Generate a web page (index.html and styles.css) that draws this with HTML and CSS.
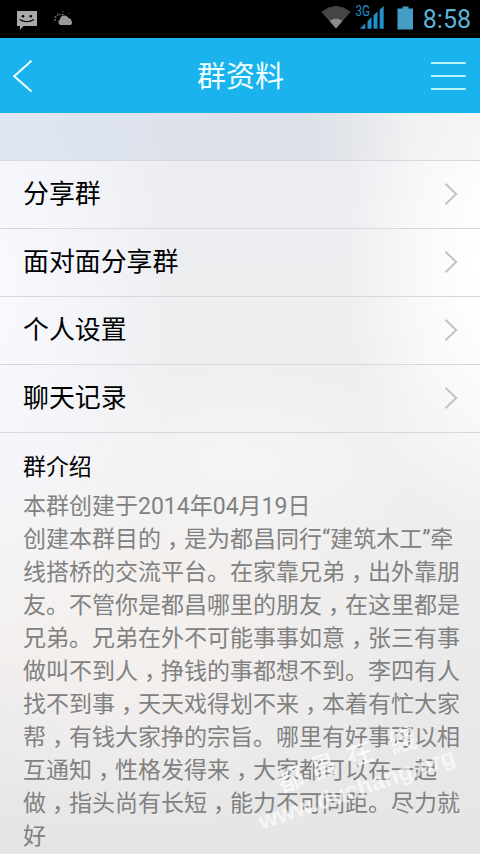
FILE: index.html
```html
<!DOCTYPE html>
<html lang="zh-CN">
<head>
<meta charset="utf-8">
<title>群资料</title>
<link rel="stylesheet" href="styles.css">
</head>
<body>
<div class="status">
  <svg class="notifications" width="60" height="38" viewBox="0 0 60 38">
    <path d="M1 11h20v15H7.500l-3.500 4v-4H1z" fill="#a9a9a9"/>
    <circle cx="7" cy="16.300" r="1.300" fill="#000"/><circle cx="14.800" cy="16.300" r="1.300" fill="#000"/>
    <path d="M3.500 19.500q7.500 4.500 14.500 0" fill="none" stroke="#000" stroke-width="1.200"/>
    <path d="M45.500 25h-1a3 3 0 0 1-.5-5.500 4.500 4.500 0 0 1 8.500-1.500q3 .5 3 3a2.800 2.800 0 0 1-1 4z" fill="#999"/>
    <path d="M39 20.500l.5-3 2.500-2.500 3-.8 3 .8" fill="none" stroke="#888" stroke-width="1.300" stroke-dasharray="1.300 1.400"/>
    <path d="M47 11v1.200M42 13v1M52.500 13.500l1-.5M39 16v1M38 20h1" stroke="#666"/>
  </svg>
  <svg class="system" width="100" height="38" viewBox="0 0 100 38">
    <path d="M.5 12q14.500-12 29 0L15 28.500z" fill="#454545"/>
    <path d="M8.500 21q6.500-5 13 0L15 28.500z" fill="#8b8b8b"/>
    <g fill="#2191ca"><path d="M39 28.700l5.300-5.500v5.500zM46.500 28.700v-7.400l4-4.200v11.600zM52.500 28.700V15.500l4-4v17.200zM58.700 28.700V9.800l4-3.800v22.700z"/></g>
    <path d="M76.500 8.500h5V6.500h6v2h4.500v21H76.500z" fill="#439dc5"/>
    <text x="34.500" y="16" class="network" textLength="14.500" lengthAdjust="spacingAndGlyphs">3G</text>
  </svg>
  <span class="clock">8:58</span>
</div>
<header class="bar">
  <svg width="24" height="40" viewBox="0 0 24 40"><path d="M19.500 4.700L2.200 20.200 19.500 35.500" fill="none" stroke="#f2feff" stroke-width="2"/></svg>
  <h1>群资料</h1>
  <svg width="36" height="40" viewBox="0 0 36 40"><path d="M1 7h34.800M1 20h34.800M1 33h34.800" stroke="#b7f1fb" stroke-width="2.200"/></svg>
</header>
<main class="page">
  <ul class="menu">
    <li><span>分享群</span><svg class="arrow" viewBox="0 0 14 24"><path d="M1.500 1.800L12.200 12 1.500 22.200"/></svg></li>
    <li><span>面对面分享群</span><svg class="arrow" viewBox="0 0 14 24"><path d="M1.500 1.800L12.200 12 1.500 22.200"/></svg></li>
    <li><span>个人设置</span><svg class="arrow" viewBox="0 0 14 24"><path d="M1.500 1.800L12.200 12 1.500 22.200"/></svg></li>
    <li><span>聊天记录</span><svg class="arrow" viewBox="0 0 14 24"><path d="M1.500 1.800L12.200 12 1.500 22.200"/></svg></li>
  </ul>
  <section class="intro">
    <h2>群介绍</h2>
    <p>本群创建于2014年04月19日<br>创建本群目的<i lang="zh-TW">，</i>是为都昌同行“建筑木工”牵<br>线搭桥的交流平台。在家靠兄弟<i lang="zh-TW">，</i>出外靠朋<br>友。不管你是都昌哪里的朋友<i lang="zh-TW">，</i>在这里都是<br>兄弟。兄弟在外不可能事事如意<i lang="zh-TW">，</i>张三有事<br>做叫不到人<i lang="zh-TW">，</i>挣钱的事都想不到。李四有人<br>找不到事<i lang="zh-TW">，</i>天天戏得划不来<i lang="zh-TW">，</i>本着有忙大家<br>帮<i lang="zh-TW">，</i>有钱大家挣的宗旨。哪里有好事可以相<br>互通知<i lang="zh-TW">，</i>性格发得来<i lang="zh-TW">，</i>大家都可以在一起<br>做<i lang="zh-TW">，</i>指头尚有长短<i lang="zh-TW">，</i>能力不可同距。尽力就<br>好</p>
  </section>
  <svg class="watermark" viewBox="0 0 220 150">
    <g transform="translate(22 125) rotate(-19)">
      <text class="site" textLength="206" lengthAdjust="spacingAndGlyphs">www.duchang.org</text>
    </g>
    <g class="name">
      <text transform="translate(41 88) rotate(-19)">都</text>
      <text transform="translate(74 75) rotate(-19)">昌</text>
      <text transform="translate(110 62) rotate(-19)">在</text>
      <text transform="translate(153 49) rotate(-19)">綫</text>
    </g>
  </svg>
</main>
</body>
</html>
```

FILE: styles.css
```css
* { box-sizing: border-box; margin: 0; padding: 0; }
body {
  width: 480px;
  height: 854px;
  overflow: hidden;
  display: flex;
  flex-direction: column;
  font-family: Roboto, "Noto Sans CJK SC", sans-serif;
  background: #ededed;
}
.status {
  height: 38px;
  flex: none;
  display: flex;
  align-items: center;
  padding: 0 9px 0 16px;
  background: #000;
}
.system { margin-left: auto; }
.network { font-size: 14.500px; fill: #2191ca; }
.clock {
  width: 50px;
  text-align: right;
  font-size: 25px;
  line-height: 38px;
  padding-top: 1px;
  color: #5bb3d9;
}
.bar {
  height: 75px;
  flex: none;
  display: flex;
  align-items: center;
  justify-content: space-between;
  padding: 0 14px 0 12px;
  background: #1bb3ee;
}
.bar h1 {
  font-size: 29px;
  font-weight: 400;
  line-height: 40px;
  color: #f0ffff;
  padding: 3px 0 0 15px;
}
.page {
  flex: 1;
  min-height: 0;
  position: relative;
  overflow: hidden;
  padding-top: 47px;
  background:
    radial-gradient(ellipse 170px 290px at 510px 150px, #fff 20%, rgba(255,255,255,.65) 55%, rgba(255,255,255,0) 100%),
    radial-gradient(ellipse 200px 380px at -20px 180px, #f7f9ff 10%, rgba(247,249,255,.6) 55%, rgba(247,249,255,0) 100%),
    radial-gradient(ellipse 220px 110px at 240px 350px, #f5f5f6, rgba(245,245,246,0)),
    radial-gradient(ellipse 320px 220px at 130px 500px, #f4f0ee 20%, rgba(244,240,238,0)),
    linear-gradient(#ebedf1, #eeeeef 35%, #ededed 60%, #e5e5e6);
}
.page::before {
  content: "";
  position: absolute;
  inset: 0 0 auto;
  height: 47px;
  background: linear-gradient(90deg, rgba(209,219,236,.6), rgba(210,215,225,.55) 65%, rgba(238,238,238,.5) 85%, rgba(242,242,242,.5));
}
.menu { list-style: none; border-top: 1px solid #d7d8dc; }
.menu li {
  height: 68px;
  display: flex;
  align-items: center;
  justify-content: space-between;
  padding: 0 22px 2px 23px;
  border-bottom: 1px solid #d7d8dc;
  font-size: 25.900px;
  line-height: 34px;
  color: #000;
}
.arrow {
  width: 14px;
  height: 24px;
  fill: none;
  stroke: #c3c3c5;
  stroke-width: 2;
}
.intro { padding: 18px 0 0 23px; white-space: nowrap; }
.intro h2 {
  font-size: 22.900px;
  font-weight: 400;
  line-height: 34px;
  color: #000;
}
.intro p {
  margin-top: 5px;
  font-size: 23px;
  line-height: 33px;
  color: #818181;
}
.intro i {
  font-family: "Noto Sans CJK TC", sans-serif;
  font-style: normal;
  line-height: 0;
  vertical-align: -7px;
}
.watermark {
  position: absolute;
  left: 240px;
  top: 592px;
  width: 220px;
  height: 150px;
  overflow: visible;
}
.site {
  font: bold 24px "Liberation Sans", sans-serif;
  fill: rgba(255,255,255,.65);
}
.name {
  font: 27px "Noto Sans CJK TC", sans-serif;
  fill: rgba(255,255,255,.8);
}
```
